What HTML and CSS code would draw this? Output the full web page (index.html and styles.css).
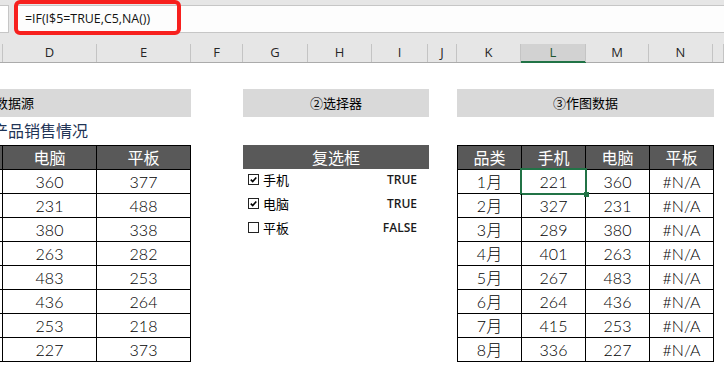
FILE: index.html
```html
<!DOCTYPE html>
<html lang="zh-CN">
<head>
    <meta charset="UTF-8">
    <meta name="viewport" content="width=device-width, initial-scale=1.0">
    <title>复选框动态图表 - 数据区</title>
    <link rel="stylesheet" href="styles.css">
</head>
<body>
    <!-- Formula Bar -->
    <div class="formula-bar">
        <div class="name-box"></div>
        <div class="formula-input">=IF(I$5=TRUE,C5,NA())</div>
        <div class="callout"></div>
    </div>

    <!-- Column Headers -->
    <div class="col-heads">
        <span></span>
        <span>D</span>
        <span>E</span>
        <span>F</span>
        <span>G</span>
        <span>H</span>
        <span>I</span>
        <span>J</span>
        <span>K</span>
        <span class="active">L</span>
        <span>M</span>
        <span>N</span>
        <span></span>
    </div>

    <div class="sheet">
        <!-- Source data -->
        <section class="block source">
            <div class="band band-wide">①数据源</div>
            <div class="title">产品销售情况</div>
            <div class="grid source-grid">
                <div class="cell head"></div><div class="cell head">电脑</div><div class="cell head">平板</div>
                <div class="cell"></div><div class="cell">360</div><div class="cell">377</div>
                <div class="cell"></div><div class="cell">231</div><div class="cell">488</div>
                <div class="cell"></div><div class="cell">380</div><div class="cell">338</div>
                <div class="cell"></div><div class="cell">263</div><div class="cell">282</div>
                <div class="cell"></div><div class="cell">483</div><div class="cell">253</div>
                <div class="cell"></div><div class="cell">436</div><div class="cell">264</div>
                <div class="cell"></div><div class="cell">253</div><div class="cell">218</div>
                <div class="cell"></div><div class="cell">227</div><div class="cell">373</div>
            </div>
        </section>

        <!-- Picker -->
        <section class="block picker">
            <div class="band">②选择器</div>
            <div class="picker-head">复选框</div>
            <div class="option">
                <span class="box"><svg viewBox="0 0 9 9"><polyline points="1.8,4.6 3.7,6.6 7.3,2.4"/></svg></span>
                <span class="label">手机</span>
                <span class="flag">TRUE</span>
            </div>
            <div class="option">
                <span class="box"><svg viewBox="0 0 9 9"><polyline points="1.8,4.6 3.7,6.6 7.3,2.4"/></svg></span>
                <span class="label">电脑</span>
                <span class="flag">TRUE</span>
            </div>
            <div class="option">
                <span class="box"></span>
                <span class="label">平板</span>
                <span class="flag">FALSE</span>
            </div>
        </section>

        <!-- Chart data -->
        <section class="block chart">
            <div class="band">③作图数据</div>
            <div class="grid chart-grid">
                <div class="cell head">品类</div><div class="cell head">手机</div><div class="cell head">电脑</div><div class="cell head">平板</div>
                <div class="cell">1月</div><div class="cell selected">221</div><div class="cell">360</div><div class="cell">#N/A</div>
                <div class="cell">2月</div><div class="cell">327</div><div class="cell">231</div><div class="cell">#N/A</div>
                <div class="cell">3月</div><div class="cell">289</div><div class="cell">380</div><div class="cell">#N/A</div>
                <div class="cell">4月</div><div class="cell">401</div><div class="cell">263</div><div class="cell">#N/A</div>
                <div class="cell">5月</div><div class="cell">267</div><div class="cell">483</div><div class="cell">#N/A</div>
                <div class="cell">6月</div><div class="cell">264</div><div class="cell">436</div><div class="cell">#N/A</div>
                <div class="cell">7月</div><div class="cell">415</div><div class="cell">253</div><div class="cell">#N/A</div>
                <div class="cell">8月</div><div class="cell">336</div><div class="cell">227</div><div class="cell">#N/A</div>
            </div>
        </section>
    </div>
</body>
</html>
```

FILE: styles.css
```css
body {
    margin: 0;
    width: 724px;
    height: 372px;
    overflow: hidden;
    background: #fff;
    color: #000;
    font-family: "Noto Sans CJK SC", sans-serif;
}

/* Formula bar */
.formula-bar {
    position: relative;
    display: flex;
    height: 33px;
    padding-top: 5px;
    box-sizing: border-box;
    background: #e6e6e6;
}
.name-box {
    width: 8px;
    background: #fff;
    border-top: 1px solid #c6c6c6;
    border-bottom: 1px solid #c6c6c6;
    border-right: 1px solid #c6c6c6;
}
.formula-input {
    flex: 1;
    margin-left: 6px;
    padding-left: 10px;
    background: #fdfdfd;
    border-top: 1px solid #c6c6c6;
    border-bottom: 1px solid #c6c6c6;
    font-family: "Open Sans", sans-serif;
    font-size: 12.4px;
    line-height: 25px;
    color: #111;
}
.callout {
    position: absolute;
    left: 14px;
    top: 0;
    width: 167px;
    height: 35px;
    box-sizing: border-box;
    border: 4px solid #f7201e;
    border-radius: 6px;
}

/* Column headers */
.col-heads {
    display: grid;
    grid-template-columns: 3px 94px 94px 52px 65px 64px 56px 29px 64px 65px 63px 64px 1fr;
    align-items: end;
    height: 29px;
    background: #e6e6e6;
    border-bottom: 1px solid #ababab;
    font-family: "Open Sans", sans-serif;
    font-size: 13px;
    color: #262626;
}
.col-heads span {
    height: 18px;
    line-height: 17px;
    text-align: center;
    border-right: 1px solid #c4c4c4;
}
.col-heads span.active {
    background: #d2d2d2;
    color: #1e5631;
    box-shadow: inset 0 -1px 0 #217346, 0 1px 0 #217346;
}

/* Sheet body */
.sheet {
    display: flex;
    align-items: flex-start;
    padding-top: 26px;
}
.block.source {
    width: 191px;
}
.block.picker {
    width: 186px;
    margin-left: 52px;
}
.block.chart {
    width: 257px;
    margin-left: 28px;
}
.band {
    height: 28px;
    line-height: 28px;
    background: #d9d9d9;
    text-align: center;
    font-size: 13px;
}
/* merged across columns that are scrolled out of view */
.band-wide {
    width: 366px;
    margin-left: -175px;
}
.title {
    height: 28px;
    line-height: 26px;
    margin-left: -8px;
    font-size: 16px;
    color: #1f3456;
    white-space: nowrap;
}

/* Tables */
.grid {
    display: grid;
    border-top: 1px solid #000;
}
.source-grid {
    grid-template-columns: 3px 94px 94px;
}
.chart-grid {
    margin-top: 28px;
    grid-template-columns: 64px 64px 64px 64px;
    border-left: 1px solid #000;
}
.cell {
    position: relative;
    height: 24px;
    box-sizing: border-box;
    border-right: 1px solid #000;
    border-bottom: 1px solid #000;
    text-align: center;
    font-family: "Lato", "Noto Sans CJK SC", sans-serif;
    font-size: 16px;
    font-weight: 300;
    line-height: 23px;
}
.cell.head {
    background: #595959;
    color: #fff;
    font-family: "Noto Sans CJK SC", sans-serif;
    font-weight: 400;
}
.cell.selected::after {
    content: "";
    position: absolute;
    left: -2px;
    top: -2px;
    right: -2px;
    bottom: -2px;
    border: 2px solid #217346;
}
.cell.selected::before {
    content: "";
    position: absolute;
    right: -4px;
    bottom: -4px;
    width: 5px;
    height: 5px;
    background: #217346;
    z-index: 1;
}

/* Checkbox picker */
.picker-head {
    height: 24px;
    line-height: 24px;
    margin-top: 28px;
    background: #595959;
    color: #fff;
    text-align: center;
    font-size: 16px;
}
.option {
    display: flex;
    align-items: center;
    height: 24px;
    padding-left: 5px;
    padding-right: 12px;
    margin-top: -2px;
    margin-bottom: 2px;
}
.box {
    width: 9px;
    height: 9px;
    border: 1px solid #222;
    background: #fff;
}
.box svg {
    display: block;
    width: 9px;
    height: 9px;
    fill: none;
    stroke: #000;
    stroke-width: 1.6;
}
.label {
    margin-left: 4px;
    font-size: 13px;
}
.flag {
    margin-left: auto;
    font-family: "Open Sans", sans-serif;
    font-size: 12px;
    font-weight: 600;
    color: #1a1a1a;
}
```
